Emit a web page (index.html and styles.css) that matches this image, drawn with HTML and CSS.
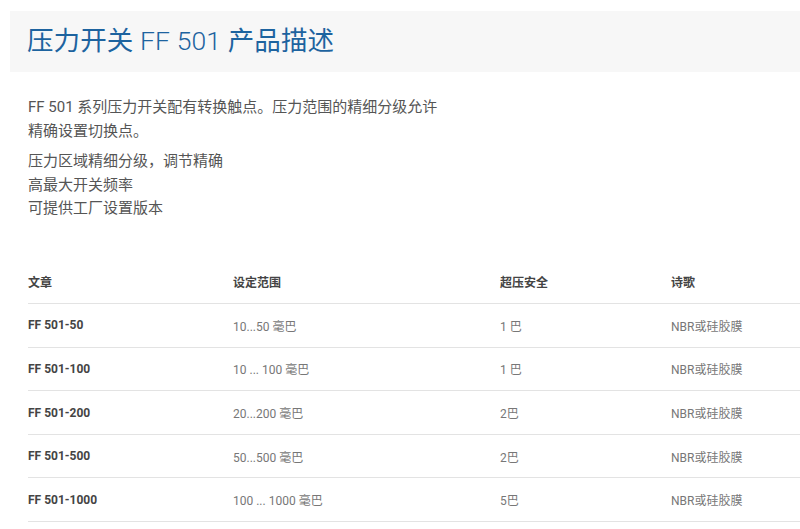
FILE: index.html
```html
<!DOCTYPE html>
<html lang="zh">
<head>
<meta charset="utf-8">
<link rel="stylesheet" href="styles.css">
</head>
<body>
<div class="page">
  <header class="band">
    <h1 class="title">压力开关 <span class="latin">FF 501</span> 产品描述</h1>
  </header>
  <section class="desc">
    <p>FF 501 系列压力开关配有转换触点。压力范围的精细分级允许精确设置切换点。</p>
    <p>压力区域精细分级，调节精确<br>高最大开关频率<br>可提供工厂设置版本</p>
  </section>
  <table class="spec">
    <thead>
      <tr><th class="c1">文章</th><th class="c2">设定范围</th><th class="c3">超压安全</th><th class="c4">诗歌</th></tr>
    </thead>
    <tbody>
      <tr><td class="name">FF 501-50</td><td>10...50 毫巴</td><td>1 巴</td><td>NBR或硅胶膜</td></tr>
      <tr><td class="name">FF 501-100</td><td>10 ... 100 毫巴</td><td>1 巴</td><td>NBR或硅胶膜</td></tr>
      <tr><td class="name">FF 501-200</td><td>20...200 毫巴</td><td>2巴</td><td>NBR或硅胶膜</td></tr>
      <tr><td class="name">FF 501-500</td><td>50...500 毫巴</td><td>2巴</td><td>NBR或硅胶膜</td></tr>
      <tr><td class="name">FF 501-1000</td><td>100 ... 1000 毫巴</td><td>5巴</td><td>NBR或硅胶膜</td></tr>
    </tbody>
  </table>
</div>
</body>
</html>
```
FILE: styles.css
```css
html, body {
  margin: 0;
  padding: 0;
  background: #ffffff;
}
body {
  font-family: Roboto, "Noto Sans CJK SC", sans-serif;
  color: #555;
  overflow: hidden;
}
.page {
  padding: 11px 0 0 10px;
}
.band {
  background: #f7f7f7;
  height: 61px;
  padding: 0 17px;
  display: flex;
  align-items: center;
}
.title {
  margin: 0;
  font-size: 26.5px;
  font-weight: 400;
  color: #1d639f;
  line-height: 1;
  letter-spacing: 0.1px;
}
.title .latin {
  font-weight: 300;
}
.desc {
  padding: 24px 0 0 18px;
  width: 415px;
  font-size: 15px;
  line-height: 23.5px;
  color: #555;
}
.desc p {
  margin: 0 0 7px 0;
}
.spec {
  margin: 40px 0 0 18px;
  border-collapse: collapse;
  width: 772px;
  font-size: 12px;
}
.spec th, .spec td {
  text-align: left;
  padding: 0;
  height: 42.6px;
  border-bottom: 1px solid #e3e3e3;
  vertical-align: middle;
}
.spec th {
  font-weight: 700;
  color: #444;
}
.spec td {
  color: #777;
}
.spec td.name {
  font-weight: 700;
  color: #444;
}
.c1 { width: 205px; }
.c2 { width: 267px; }
.c3 { width: 171px; }
```
